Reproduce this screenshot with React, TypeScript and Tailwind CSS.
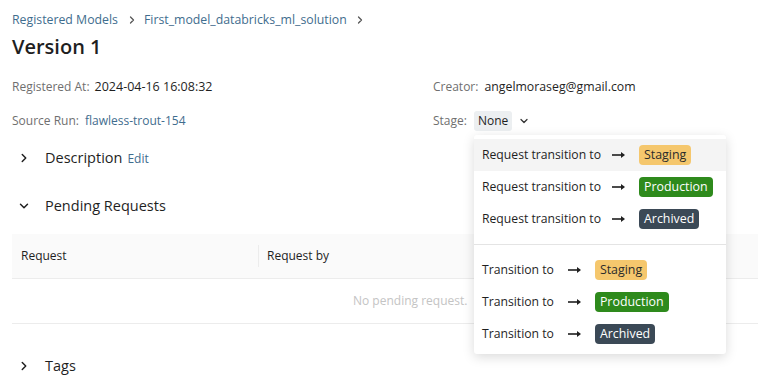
import { ChevronDown, ChevronRight } from "lucide-react";

function Arrow() {
  return (
    <svg width="14" height="8" viewBox="0 0 14 8" className="shrink-0">
      <path d="M0 4h10" stroke="#1f1f1f" strokeWidth="1.6" />
      <path d="M9 1l4 3-4 3z" fill="#1f1f1f" />
    </svg>
  );
}

function Badge({ stage }: { stage: string }) {
  const cls =
    stage === "Staging"
      ? "bg-[#f5c76d] text-[#2b2b2b]"
      : stage === "Production"
      ? "bg-[#2e8a1c] text-white"
      : "bg-[#3b4956] text-white";
  return <span className={`${cls} rounded-[4px] px-[5px] h-[20px] leading-[20px] text-[12.4px] inline-block`}>{stage}</span>;
}

function MenuItem({ label, stage, gap, active }: { label: string; stage: string; gap: string; active?: boolean }) {
  return (
    <div className={`flex items-center h-[32px] pl-2 ${active ? "bg-[#f4f4f4]" : ""}`}>
      <span className={`${gap} text-[12.2px] text-[#1f1f1f]`}>{label}</span>
      <Arrow />
      <span className="ml-[13px] flex">
        <Badge stage={stage} />
      </span>
    </div>
  );
}

export default function App() {
  return (
    <div className="relative w-[758px] h-[392px] overflow-hidden bg-white text-[#1f1f1f] font-['Open_Sans',sans-serif]">
      <div className="pl-3 pt-[10px]">
        <div className="flex items-center text-[12.3px] text-[#3f6d8e] h-[20px]">
          <span>Registered Models</span>
          <ChevronRight size={12} strokeWidth={2.5} className="text-[#555] ml-[8px] mr-[6px]" />
          <span>First_model_databricks_ml_solution</span>
          <ChevronRight size={12} strokeWidth={2.5} className="text-[#555] ml-[7px]" />
        </div>
        <h1 className="text-[20px] font-semibold leading-[28px] mt-[3px]">Version 1</h1>

        <div className="grid grid-cols-[421px_1fr] mt-[16px] text-[12px]">
          <div className="flex items-center h-[20px]">
            <span className="text-[#6f6f6f]">Registered At:</span>
            <span className="ml-[5px] text-[12.5px] text-[#1f1f1f]">2024-04-16 16:08:32</span>
          </div>
          <div className="flex items-center h-[20px]">
            <span className="text-[#6f6f6f]">Creator:</span>
            <span className="ml-[6px] text-[12.3px] text-[#1f1f1f]">angelmoraseg@gmail.com</span>
          </div>
          <div className="flex items-center h-[20px] mt-[14px]">
            <span className="text-[#6f6f6f]">Source Run:</span>
            <span className="ml-[6px] text-[#3f6d8e]">flawless-trout-154</span>
          </div>
          <div className="flex items-center h-[20px] mt-[14px]">
            <span className="text-[#6f6f6f]">Stage:</span>
            <span className="ml-[7px] bg-[#eceff1] px-[4px] rounded-[3px] leading-[20px]">None</span>
            <ChevronDown size={12} strokeWidth={2.5} className="ml-[6px] text-[#333]" />
          </div>
        </div>

        <div className="flex items-center h-[24px] mt-[15px] pl-[5px]">
          <ChevronRight size={14} strokeWidth={2.5} />
          <span className="ml-[14px] text-[14.5px]">Description</span>
          <span className="ml-[5px] text-[12px] text-[#3f6d8e] mt-[2px]">Edit</span>
        </div>

        <div className="flex items-center h-[24px] mt-[24px] pl-[5px]">
          <ChevronDown size={14} strokeWidth={2.5} />
          <span className="ml-[14px] text-[14.5px]">Pending Requests</span>
        </div>

        <div className="mt-[16px] text-[12px]">
          <div className="flex items-center h-[45px] bg-[#fafafa] border-b border-[#ececec]">
            <div className="w-[247px] pl-[9px] border-r border-[#ececec] h-[22px] flex items-center">Request</div>
            <div className="pl-[8px]">Request by</div>
          </div>
          <div className="h-[45px] border-b border-[#ececec] flex items-center">
            <span className="ml-[341px] text-[#c4c4c4]">No pending request.</span>
          </div>
        </div>

        <div className="flex items-center h-[24px] mt-[30px] pl-[5px]">
          <ChevronRight size={14} strokeWidth={2.5} />
          <span className="ml-[14px] text-[14.5px]">Tags</span>
        </div>
      </div>

      <div className="absolute left-[474px] top-[135px] w-[252px] bg-white rounded-[3px] shadow-[0_3px_12px_rgba(0,0,0,0.15)] py-1">
        <MenuItem label="Request transition to" stage="Staging" gap="mr-[11px]" active />
        <MenuItem label="Request transition to" stage="Production" gap="mr-[11px]" />
        <MenuItem label="Request transition to" stage="Archived" gap="mr-[11px]" />
        <div className="border-t border-[#e4e4e4] mt-[9px] mb-[9px]" />
        <MenuItem label="Transition to" stage="Staging" gap="mr-[14px]" />
        <MenuItem label="Transition to" stage="Production" gap="mr-[14px]" />
        <MenuItem label="Transition to" stage="Archived" gap="mr-[14px]" />
      </div>
    </div>
  );
}
